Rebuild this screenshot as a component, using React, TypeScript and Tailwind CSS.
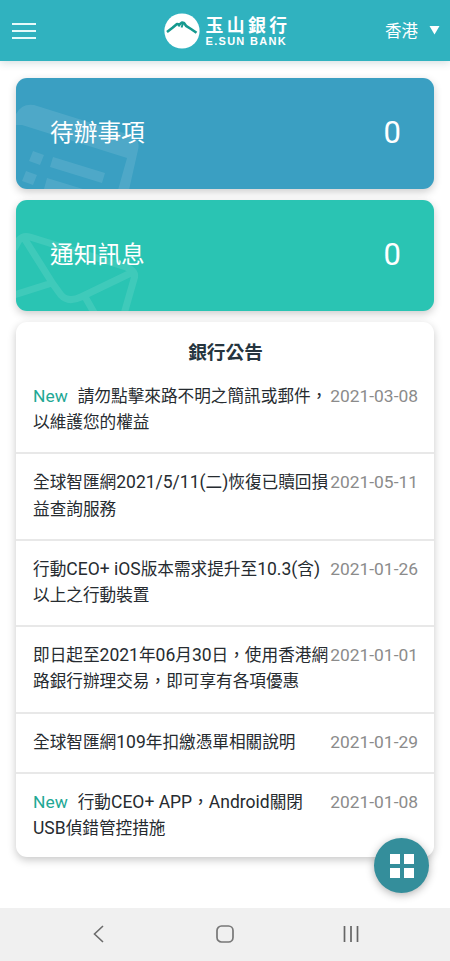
const font = "font-['Roboto','Noto_Sans_CJK_TC',sans-serif]";

type Notice = { isNew?: boolean; lines: string[]; date: string };

const notices: Notice[] = [
  { isNew: true, lines: ['請勿點擊來路不明之簡訊或郵件，', '以維護您的權益'], date: '2021-03-08' },
  { lines: ['全球智匯網2021/5/11(二)恢復已贖回損', '益查詢服務'], date: '2021-05-11' },
  { lines: ['行動CEO+ iOS版本需求提升至10.3(含)', '以上之行動裝置'], date: '2021-01-26' },
  { lines: ['即日起至2021年06月30日，使用香港網', '路銀行辦理交易，即可享有各項優惠'], date: '2021-01-01' },
  { lines: ['全球智匯網109年扣繳憑單相關說明'], date: '2021-01-29' },
  { isNew: true, lines: ['行動CEO+ APP，Android關閉', 'USB偵錯管控措施'], date: '2021-01-08' },
];

function Header() {
  return (
    <header className="relative z-10 flex h-[61px] items-center justify-between bg-[#30b2bf] pl-3 pr-2.5 shadow-[0_2px_8px_rgba(20,80,90,0.18)]">
      <button className="flex w-[108px] flex-col gap-[5px]" aria-label="menu">
        <span className="h-[2px] w-6 bg-[#e6fafa]" />
        <span className="h-[2px] w-6 bg-[#e6fafa]" />
        <span className="h-[2px] w-6 bg-[#e6fafa]" />
      </button>
      <div className="flex items-center gap-[6px] pl-px">
        <svg width="36" height="36" viewBox="0 0 36 36">
          <circle cx="18" cy="18" r="17.6" fill="#fff" />
          <path d="M3 19L8.500 14.800L13 11L15.500 11.500L18 9.500L20 10L22 12.800L27 16L32.500 19.800" fill="none" stroke="#15998f" strokeWidth="2.600" strokeLinejoin="round" />
          <path d="M15.500 11.500L14.500 13.500M19 10.500L17.500 14.500" fill="none" stroke="#15998f" strokeWidth="2" />
        </svg>
        <div className="flex w-[84px] flex-col gap-[2px] pt-px text-white">
          <span className="whitespace-nowrap font-['Noto_Sans_CJK_TC',sans-serif] text-[17.800px] font-bold leading-[18px] tracking-[3.500px]">玉山銀行</span>
          <span className="whitespace-nowrap font-['Liberation_Sans',sans-serif] text-[11px] font-bold leading-[12px] tracking-[1.300px]">E.SUN BANK</span>
        </div>
      </div>
      <button className="flex w-[108px] items-center justify-end gap-[11px] text-[16.5px] text-white">
        <span className="pt-[3px]">香港</span>
        <svg width="11" height="9" viewBox="0 0 11 9"><path d="M.5 0h10l-5 8.500Z" fill="#fff" /></svg>
      </button>
    </header>
  );
}

function ListArt() {
  return (
    <svg className="absolute left-0 top-0" width="140" height="111" viewBox="0 0 140 111" fill="#fff" fillOpacity=".1">
      <path fillRule="evenodd" d="M0 36Q6 25 18 27L114 57Q125 61 122 72L113 112H-2V36ZM6 47L111 80L102 112H-2V47Z" />
      <path d="M17 73l11 4-4 10-11-4ZM10 93l11 4-4 10-11-4ZM37 79l52 16-3 10-52-16ZM31 100l36 11H28Z" />
    </svg>
  );
}

function MailArt() {
  return (
    <svg className="absolute left-0 top-0" width="140" height="111" viewBox="0 0 140 111" fill="none" stroke="#fff" strokeOpacity=".1" strokeWidth="7">
      <path d="M-2 49L3 40Q7 35 14 37L110 67Q121 71 118 79L108 114M8 38L37 84L45 95Q52 103 65 97L119 71M-2 95L36 83M68 95L80 116" />
    </svg>
  );
}

/** Sets Latin letters and digits slightly larger than the Han characters beside them. */
function MixedText({ text }: { text: string }) {
  return (
    <>
      {text.split(/([ -~]+)/).map((part, i) =>
        i % 2 === 1 ? <span key={i} className="text-[17.500px] leading-none">{part}</span> : part,
      )}
    </>
  );
}

export default function App() {
  return (
    <div className={`flex h-[961px] w-[450px] flex-col overflow-hidden bg-white ${font}`} lang="zh-Hant">
      <Header />
      <main className="flex flex-1 flex-col px-4 pt-[17px]">
        <section className="relative mb-[11px] flex h-[111px] w-[418px] items-center justify-between overflow-hidden rounded-[11px] bg-[#3a9fc2] pl-[34px] pr-[33px] text-white shadow-[0_3px_8px_rgba(0,0,0,0.2)]">
          <ListArt />
          <h2 className="relative text-[23.7px]">待辦事項</h2>
          <span className="text-[31px]">0</span>
        </section>
        <section className="relative mb-[11px] flex h-[111px] w-[418px] items-center justify-between overflow-hidden rounded-[11px] bg-[#2ac4b3] pl-[34px] pr-[33px] text-white shadow-[0_3px_8px_rgba(0,0,0,0.2)]">
          <MailArt />
          <h2 className="relative text-[23.7px]">通知訊息</h2>
          <span className="text-[31px]">0</span>
        </section>
        <section className="h-[535px] w-[418px] rounded-[11px] bg-white shadow-[0_3px_9px_rgba(0,0,0,0.22)]">
          <h3 className="flex h-[46px] items-end justify-center pb-px pl-px text-[18.7px] font-bold leading-[28px] text-[#26353e]">銀行公告</h3>
          <ul>
            {notices.map((n) => (
              <li key={n.date} className="flex justify-between border-b-2 border-[#e8e8e8] pb-[16px] pt-[16px] pl-[17px] pr-4 text-[16.65px] leading-[26.2px] text-[#262b30] last:border-0">
                <div className="w-0 whitespace-nowrap">
                  {n.lines.map((line, i) => (
                    <p key={line} className="h-[26.2px]">
                      {n.isNew && i === 0 && <span className="mr-[10px] text-[17.400px] leading-none text-[#22a894]">New</span>}
                      <MixedText text={line} />
                    </p>
                  ))}
                </div>
                <time className="h-[26.2px] text-[17.400px] leading-[24.400px] text-[#8b8b8b]">{n.date}</time>
              </li>
            ))}
          </ul>
        </section>
      </main>
      <button className="absolute left-[374px] top-[838px] grid h-[55px] w-[55px] grid-cols-[10px_10px] place-content-center gap-[4px] rounded-full bg-[#348e9b] shadow-[0_2px_8px_rgba(0,0,0,0.3)]" aria-label="apps">
        <span className="h-[10px] bg-white" />
        <span className="h-[10px] bg-white" />
        <span className="h-[10px] bg-white" />
        <span className="h-[10px] bg-white" />
      </button>
      <nav className="flex h-[53px] items-center justify-around bg-[#f0f0f0] px-9 pb-px">
        <svg width="20" height="20" viewBox="0 0 20 20" fill="none" stroke="#6c6c6c" strokeWidth="1.6"><path d="M14 2L5.500 10l8.500 8" /></svg>
        <svg width="20" height="20" viewBox="0 0 20 20" fill="none" stroke="#777" strokeWidth="1.7"><rect x="2" y="2" width="16" height="16" rx="4.500" /></svg>
        <svg width="20" height="20" viewBox="0 0 20 20" fill="none" stroke="#666" strokeWidth="1.7"><path d="M3.500 2v16M10 2v16M16.500 2v16" /></svg>
      </nav>
    </div>
  );
}
